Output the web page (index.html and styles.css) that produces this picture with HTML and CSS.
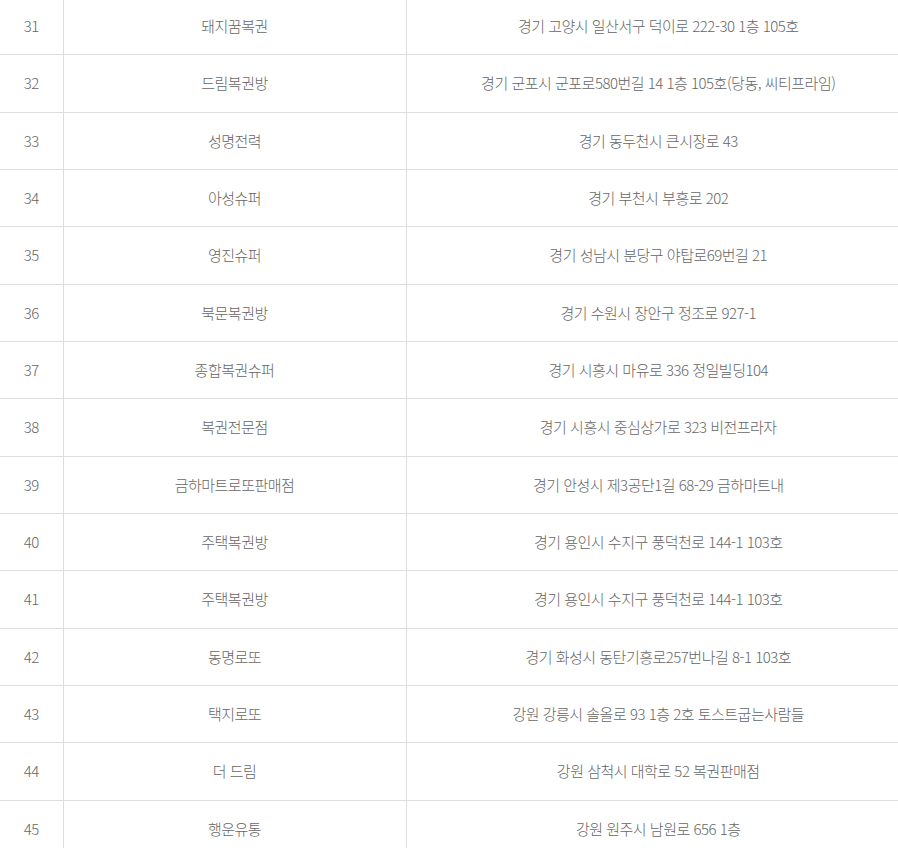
FILE: index.html
```html
<!DOCTYPE html>
<html lang="ko">
<head>
<meta charset="utf-8">
<link rel="stylesheet" href="styles.css">
</head>
<body>
<div class="wrap">
<table class="shops">
<colgroup><col class="c-no"><col class="c-name"><col class="c-addr"></colgroup>
<tbody>
<tr><td>31</td><td>돼지꿈복권</td><td>경기 고양시 일산서구 덕이로 222-30 1층 105호</td></tr>
<tr><td>32</td><td>드림복권방</td><td>경기 군포시 군포로580번길 14 1층 105호(당동, 씨티프라임)</td></tr>
<tr><td>33</td><td>성명전력</td><td>경기 동두천시 큰시장로 43</td></tr>
<tr><td>34</td><td>아성슈퍼</td><td>경기 부천시 부흥로 202</td></tr>
<tr><td>35</td><td>영진슈퍼</td><td>경기 성남시 분당구 야탑로69번길 21</td></tr>
<tr><td>36</td><td>북문복권방</td><td>경기 수원시 장안구 정조로 927-1</td></tr>
<tr><td>37</td><td>종합복권슈퍼</td><td>경기 시흥시 마유로 336 정일빌딩104</td></tr>
<tr><td>38</td><td>복권전문점</td><td>경기 시흥시 중심상가로 323 비전프라자</td></tr>
<tr><td>39</td><td>금하마트로또판매점</td><td>경기 안성시 제3공단1길 68-29 금하마트내</td></tr>
<tr><td>40</td><td>주택복권방</td><td>경기 용인시 수지구 풍덕천로 144-1 103호</td></tr>
<tr><td>41</td><td>주택복권방</td><td>경기 용인시 수지구 풍덕천로 144-1 103호</td></tr>
<tr><td>42</td><td>동명로또</td><td>경기 화성시 동탄기흥로257번나길 8-1 103호</td></tr>
<tr><td>43</td><td>택지로또</td><td>강원 강릉시 솔올로 93 1층 2호 토스트굽는사람들</td></tr>
<tr><td>44</td><td>더 드림</td><td>강원 삼척시 대학로 52 복권판매점</td></tr>
<tr><td>45</td><td>행운유통</td><td>강원 원주시 남원로 656 1층</td></tr>
</tbody>
</table>
</div>
</body>
</html>
```
FILE: styles.css
```css
html, body {
  margin: 0;
  padding: 0;
  background: #fff;
  overflow: hidden;
}
.wrap {
  width: 898px;
  height: 848px;
  overflow: hidden;
}
.shops {
  width: 910px;
  margin-top: -3px;
  border-collapse: collapse;
  table-layout: fixed;
  font-family: "Noto Sans CJK KR", "Noto Sans", sans-serif;
  font-weight: 300;
  font-size: 15px;
  letter-spacing: -0.5px;
  color: #666;
}
.c-no { width: 63px; }
.c-name { width: 343px; }
.c-addr { width: auto; }
.shops td {
  height: 57.33px;
  padding: 0;
  box-sizing: border-box;
  text-align: center;
  vertical-align: middle;
  border-top: 1px solid #ddd;
  border-bottom: 1px solid #ddd;
  line-height: 20px;
}
.shops td + td {
  border-left: 1px solid #ddd;
}
```
